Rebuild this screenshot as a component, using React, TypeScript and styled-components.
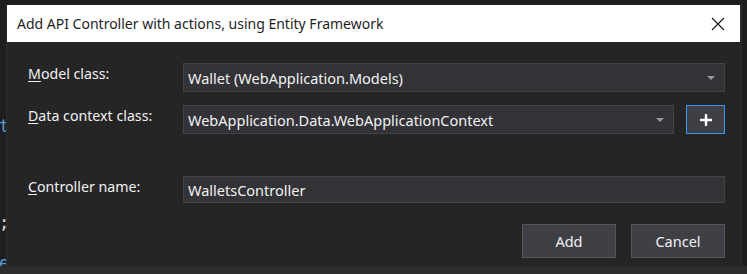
import React from "react";
import styled, { createGlobalStyle } from "styled-components";

const GlobalStyle = createGlobalStyle`
  html, body {
    margin: 0;
    padding: 0;
    background: #1e1e1e;
  }
  body {
    font-family: "Noto Sans", "Open Sans", sans-serif;
  }
`;

const App: React.FC = () => {
  return (
    <>
      <GlobalStyle />
      <Page>
        <TopGap />
        <Middle>
          <CodeStrip>
            <CodeChar color="#569cd6" top="111px">t</CodeChar>
            <CodeChar color="#dcdcdc" top="208px">;</CodeChar>
            <CodeChar color="#569cd6" top="248px">e</CodeChar>
          </CodeStrip>
          <Dialog>
            <TitleBar>
              <Title>Add API Controller with actions, using Entity Framework</Title>
              <CloseButton aria-label="Close">
                <svg width="14" height="14" viewBox="0 0 14 14">
                  <path d="M1 1 L13 13 M13 1 L1 13" stroke="#1e1e1e" strokeWidth="1.2" />
                </svg>
              </CloseButton>
            </TitleBar>
            <Body>
              <Form>
                <Label>
                  <u>M</u>odel class:
                </Label>
                <Field>
                  <Select>
                    <span>Wallet (WebApplication.Models)</span>
                    <Arrow />
                  </Select>
                </Field>

                <Label>
                  <u>D</u>ata context class:
                </Label>
                <Field>
                  <Select>
                    <span>WebApplication.Data.WebApplicationContext</span>
                    <Arrow />
                  </Select>
                  <PlusButton aria-label="Add data context">
                    <svg width="14" height="14" viewBox="0 0 14 14">
                      <path d="M7 1 V13 M1 7 H13" stroke="#ffffff" strokeWidth="2.4" />
                    </svg>
                  </PlusButton>
                </Field>

                <Spacer />

                <Label>
                  <u>C</u>ontroller name:
                </Label>
                <Field>
                  <TextInput>WalletsController</TextInput>
                </Field>
              </Form>
              <Footer>
                <Button>Add</Button>
                <Button>Cancel</Button>
              </Footer>
            </Body>
          </Dialog>
          <RightEdge />
        </Middle>
        <BottomBar />
      </Page>
    </>
  );
};

export default App;

const Page = styled.div`
  width: 747px;
  height: 274px;
  display: flex;
  flex-direction: column;
  background: #1e1e1e;
  overflow: hidden;
`;

const TopGap = styled.div`
  height: 5px;
  background: #1e1e1e;
`;

const Middle = styled.div`
  display: flex;
  height: 261px;
`;

const CodeStrip = styled.div`
  position: relative;
  width: 6px;
  background: #1e1e1e;
  overflow: hidden;
`;

const CodeChar = styled.span<{ color: string; top: string }>`
  position: absolute;
  left: -1px;
  top: ${(p) => p.top};
  font-family: "DejaVu Sans Mono", monospace;
  font-size: 17px;
  color: ${(p) => p.color};
`;

const Dialog = styled.div`
  width: 734px;
  display: flex;
  flex-direction: column;
  background: #252526;
  border-left: 1px solid #2d2d30;
`;

const TitleBar = styled.div`
  height: 37px;
  display: flex;
  align-items: center;
  justify-content: space-between;
  background: #ffffff;
  padding: 0 15px 0 10px;
  margin-right: 1px;
`;

const Title = styled.div`
  font-size: 14px;
  color: #1e1e1e;
`;

const CloseButton = styled.div`
  display: flex;
  align-items: center;
  justify-content: center;
  width: 14px;
  height: 14px;
`;

const Body = styled.div`
  flex: 1;
  display: flex;
  flex-direction: column;
  padding: 21px 16px 0 21px;
`;

const Form = styled.div`
  display: grid;
  grid-template-columns: 155px 1fr;
  row-gap: 13px;
`;

const Label = styled.div`
  font-size: 14.2px;
  line-height: 20px;
  padding-top: 1px;
  color: #f1f1f1;
  u {
    text-decoration-thickness: 1px;
    text-underline-offset: 2px;
  }
`;

const Field = styled.div`
  display: flex;
  gap: 12px;
`;

const Select = styled.div`
  flex: 1;
  height: 29px;
  box-sizing: border-box;
  display: flex;
  align-items: center;
  justify-content: space-between;
  padding: 0 9px 0 4px;
  background: #333337;
  border: 1px solid #434346;
  font-size: 14.5px;
  color: #f1f1f1;
`;

const Arrow = styled.div`
  width: 0;
  height: 0;
  border-left: 4px solid transparent;
  border-right: 4px solid transparent;
  border-top: 4px solid #999999;
`;

const PlusButton = styled.div`
  width: 39px;
  height: 29px;
  box-sizing: border-box;
  display: flex;
  align-items: center;
  justify-content: center;
  background: #3f3f46;
  border: 1px solid #3399ff;
`;

const Spacer = styled.div`
  grid-column: 1 / -1;
  height: 16px;
`;

const TextInput = styled.div`
  flex: 1;
  height: 27px;
  box-sizing: border-box;
  display: flex;
  align-items: center;
  padding: 0 4px;
  background: #333337;
  border: 1px solid #434346;
  font-size: 14.5px;
  color: #f1f1f1;
`;

const Footer = styled.div`
  display: flex;
  justify-content: flex-end;
  gap: 15px;
  margin-top: 21px;
`;

const Button = styled.div`
  width: 94px;
  height: 34px;
  box-sizing: border-box;
  display: flex;
  align-items: center;
  justify-content: center;
  background: #3f3f46;
  border: 1px solid #555555;
  font-size: 14.5px;
  color: #f1f1f1;
`;

const RightEdge = styled.div`
  flex: 1;
  background: #1e1e1e;
  border-left: 1px solid #2d2d30;
`;

const BottomBar = styled.div`
  flex: 1;
  background: #2d2d30;
`;
